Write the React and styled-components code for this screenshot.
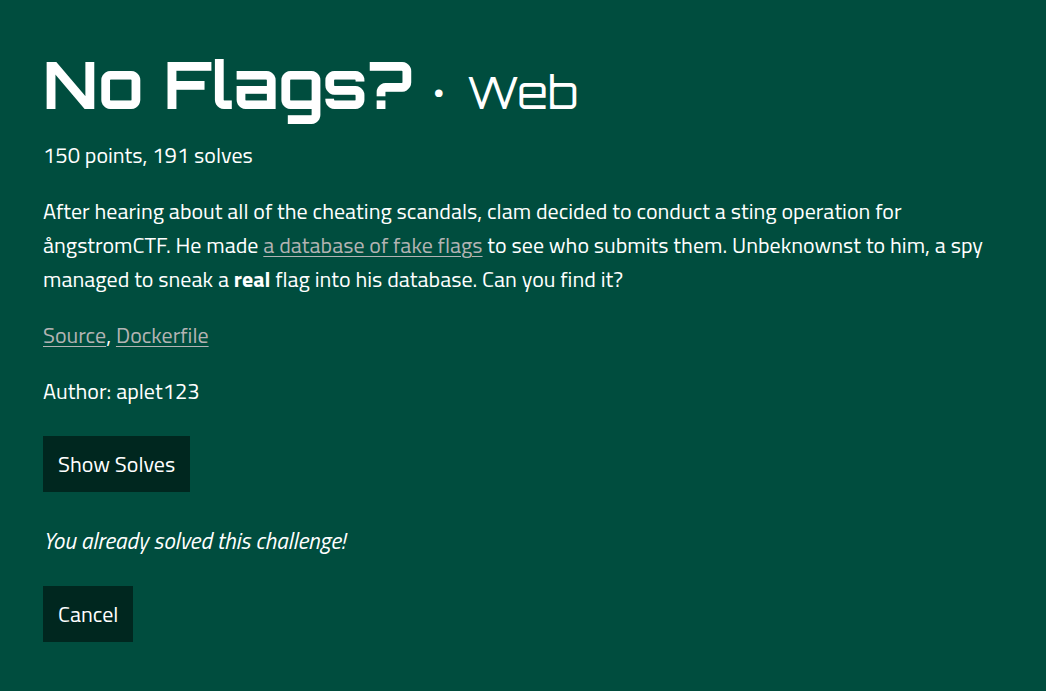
import React from "react";
import styled, { createGlobalStyle } from "styled-components";

const GlobalStyle = createGlobalStyle`
  *, *::before, *::after { box-sizing: border-box; }
  html { background: #004d3e; }
  body {
    margin: 0;
    background: #004d3e;
    color: #fff;
    font-family: "Titillium Web", "Open Sans", "Noto Sans", sans-serif;
    font-size: 22px;
    line-height: 34px;
  }
`;

const Challenge = styled.main`
  padding: 43px;
`;

const Title = styled.h1`
  display: flex;
  align-items: baseline;
  gap: 20px;
  margin: 0 0 13px;
  font-family: Orbitron, "DejaVu Sans", sans-serif;
  font-size: 66px;
  font-weight: 700;
  line-height: 82px;
`;

const Category = styled.span`
  display: flex;
  align-items: baseline;
  gap: 22px;
  font-size: 44px;
  font-weight: 400;
  line-height: 44px;
`;

const Dot = styled.span`
  font-family: "Open Sans", sans-serif;
  font-weight: 700;
`;

const Text = styled.p`
  margin: 0 0 22px;
`;

const Notice = styled.em`
  font-size: 23px;
`;

const Link = styled.a`
  color: #b3b3b3;
  text-decoration: underline;
  text-decoration-thickness: 1px;
  text-underline-offset: 3px;
`;

const Button = styled.button`
  display: block;
  height: 56px;
  margin: 28px 0 32px;
  padding: 0 15px;
  border: 0;
  background: #00271f;
  color: inherit;
  font: inherit;
  cursor: pointer;
`;

export default function App() {
  return (
    <>
      <GlobalStyle />
      <Challenge>
        <Title>
          No Flags?
          <Category>
            <Dot>·</Dot>
            <span>Web</span>
          </Category>
        </Title>
        <Text>150 points, 191 solves</Text>
        <Text>
          After hearing about all of the cheating scandals, clam decided to conduct a sting operation for
          ångstromCTF. He made <Link href="#database">a database of fake flags</Link> to see who submits them.
          Unbeknownst to him, a spy managed to sneak a <strong>real</strong> flag into his database. Can you find it?
        </Text>
        <Text>
          <Link href="#source">Source</Link>, <Link href="#dockerfile">Dockerfile</Link>
        </Text>
        <Text>Author: aplet123</Text>
        <Button type="button">Show Solves</Button>
        <Text><Notice>You already solved this challenge!</Notice></Text>
        <Button type="button">Cancel</Button>
      </Challenge>
    </>
  );
}
